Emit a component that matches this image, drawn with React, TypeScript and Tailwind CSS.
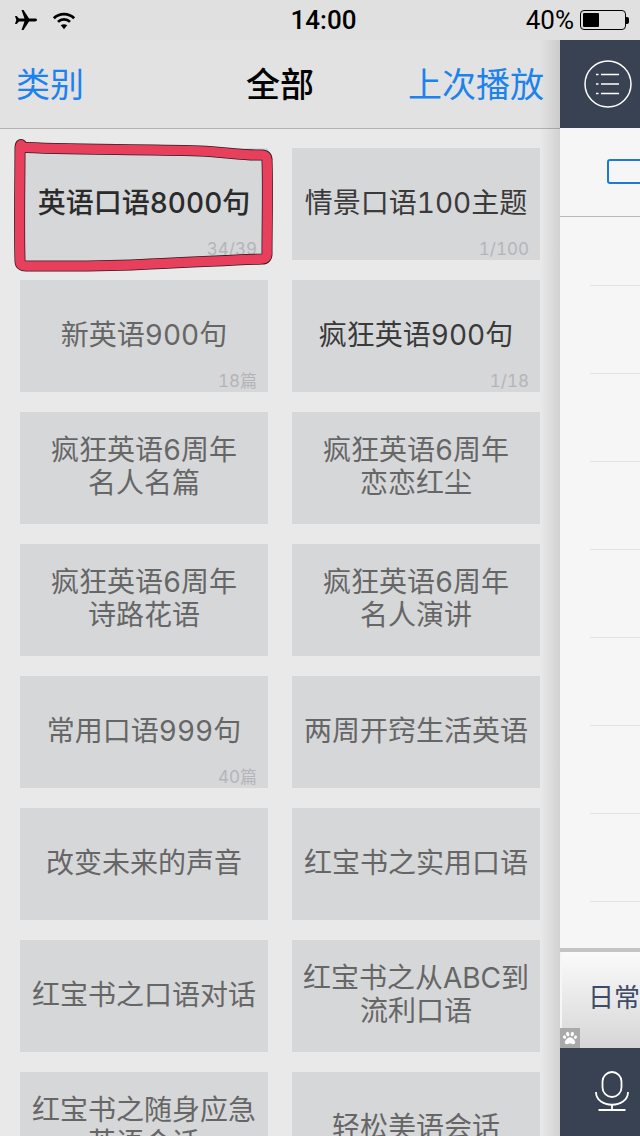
import { FaPaw } from "react-icons/fa";

const tiles = [
  { lines: ["英语口语8000句"], badge: "34/39", tone: "text-[#2b2b2b] font-medium" },
  { lines: ["情景口语100主题"], badge: "1/100", tone: "text-[#3a3a3a]" },
  { lines: ["新英语900句"], badge: "18篇", tone: "text-[#666666]" },
  { lines: ["疯狂英语900句"], badge: "1/18", tone: "text-[#3a3a3a]" },
  { lines: ["疯狂英语6周年", "名人名篇"], tone: "text-[#666666]" },
  { lines: ["疯狂英语6周年", "恋恋红尘"], tone: "text-[#666666]" },
  { lines: ["疯狂英语6周年", "诗路花语"], tone: "text-[#666666]" },
  { lines: ["疯狂英语6周年", "名人演讲"], tone: "text-[#666666]" },
  { lines: ["常用口语999句"], badge: "40篇", tone: "text-[#666666]" },
  { lines: ["两周开窍生活英语"], tone: "text-[#666666]" },
  { lines: ["改变未来的声音"], tone: "text-[#666666]" },
  { lines: ["红宝书之实用口语"], tone: "text-[#666666]" },
  { lines: ["红宝书之口语对话"], tone: "text-[#666666]" },
  { lines: ["红宝书之从ABC到", "流利口语"], tone: "text-[#666666]" },
  { lines: ["红宝书之随身应急", "英语会话"], tone: "text-[#666666]" },
  { lines: ["轻松美语会话"], tone: "text-[#666666]" },
];

function Tile({ lines, badge, tone }: { lines: string[]; badge?: string; tone: string }) {
  return (
    <div className={`relative h-[112px] pb-[2px] flex flex-col items-center justify-center bg-[#d6d7d9] text-[28px] leading-[33px] tabular-nums ${tone}`}>
      {lines.map((line) => (
        <span key={line}>{line}</span>
      ))}
      {badge && (
        <span className="absolute right-[11px] bottom-[2px] text-[17px] leading-[18px] font-normal text-[#b4b5b7]">
          {badge}
        </span>
      )}
    </div>
  );
}

function Scribble() {
  const d =
    "M20 147 C 60 150 130 149 200 151 C 225 152 245 156 262 155 Q 267 155 267 160 C 268 185 267 225 267 254 Q 267 259 262 259 C 230 260 200 262 150 264 C 100 267 60 266 26 266 Q 20 266 20 261 C 19 225 20 185 20 147 Z";
  return (
    <svg className="absolute left-0 top-0 pointer-events-none" width="290" height="280" viewBox="0 0 290 280" fill="none">
      <path d={d} stroke="#2a1a20" strokeWidth="11" strokeLinejoin="round" />
      <circle cx="21" cy="145" r="6" fill="#2a1a20" />
      <path d={d} stroke="#e8405c" strokeWidth="9.500" strokeLinejoin="round" />
      <circle cx="21" cy="145" r="5" fill="#e8405c" />
    </svg>
  );
}

export default function App() {
  return (
    <div className="relative w-[640px] h-[1136px] overflow-hidden flex flex-col bg-[#e9e9e9] font-['Inter','Noto_Sans_CJK_SC',sans-serif]">
      {/* status bar */}
      <div className="h-[40px] shrink-0 bg-[#e0e0e0] flex items-center justify-between pl-[13px] pr-[11px] text-black font-['Roboto',sans-serif]">
        <div className="w-[225px] flex items-center gap-[14px]">
          <svg width="25" height="24" viewBox="0 0 24 24" fill="currentColor">
            <path d="M23.500 12c0-.9-1-1.400-2-1.400h-6L10 2H8l3 8.600H5.500L3.200 8H1.500l1.300 4-1.300 4h1.700l2.300-2.600H11L8 22h2l5.500-8.600h6c1 0 2-.5 2-1.400z" />
          </svg>
          <svg width="24" height="19" viewBox="0 0 26 20" fill="none" stroke="currentColor" strokeWidth="3">
            <path d="M2 7.500 C8 1.500 18 1.500 24 7.500" />
            <path d="M6.500 11.500 C10 8 16 8 19.500 11.500" />
            <path d="M13 19.500 L9.500 15.200 C11.500 13.600 14.500 13.600 16.500 15.200 Z" fill="currentColor" stroke="none" />
          </svg>
        </div>
        <span className="text-[26px] font-medium leading-none">14:00</span>
        <div className="w-[220px] flex items-center justify-end gap-[6px]">
          <span className="text-[26px] leading-none">40%</span>
          <div className="flex items-center">
            <div className="w-[46px] h-[20px] border border-black rounded-[4px] p-[2px]">
              <div className="w-[16px] h-full bg-black rounded-[1px]" />
            </div>
            <div className="w-[3px] h-[7px] bg-black rounded-r-[2px]" />
          </div>
        </div>
      </div>

      <div className="flex-1 flex min-h-0">
        {/* left list */}
        <div className="relative w-[560px] shrink-0 flex flex-col">
          <div className="h-[89px] shrink-0 bg-[#e2e2e2] border-b border-[#b3b3b3] flex items-center justify-between pl-[16px] pr-[16px] text-[34px] text-[#1c83ee]">
            <span className="w-[200px]">类别</span>
            <span className="font-medium text-black">全部</span>
            <span className="w-[200px] text-right whitespace-nowrap flex justify-end">上次播放</span>
          </div>
          <div className="grid grid-cols-2 gap-x-6 gap-y-5 px-5 pt-[19px]">
            {tiles.map((tile) => (
              <Tile key={tile.lines.join("")} {...tile} />
            ))}
          </div>
          <div className="absolute right-0 top-0 bottom-0 w-[20px] bg-gradient-to-r from-transparent to-black/10" />
        </div>

        {/* right drawer */}
        <div className="w-[80px] shrink-0 flex flex-col bg-[#f6f6f6] overflow-hidden">
          <div className="h-[88px] shrink-0 bg-[#384252] flex items-center pl-[24px]">
            <svg width="48" height="48" viewBox="0 0 48 48" fill="none" stroke="#ffffff">
              <circle cx="24" cy="24" r="23" strokeWidth="1.500" />
              <path d="M17 14.500H35M17 24H35M17 33.500H35" strokeWidth="1.500" />
              <path d="M12 14.500H14.500M12 24H14.500M12 33.500H14.500" strokeWidth="1.500" />
            </svg>
          </div>
          <div className="h-[89px] shrink-0 border-b border-[#b9b9b9] pt-[31px] pl-[47px]">
            <div className="w-[60px] h-[25px] border-2 border-[#1c78dc] rounded-l-[3px]" />
          </div>
          <div className="h-[69px] shrink-0 ml-[30px] border-b border-[#e2e2e2]" />
          {[0, 1, 2, 3, 4, 5, 6].map((row) => (
            <div key={row} className="h-[88px] shrink-0 ml-[30px] border-b border-[#e2e2e2]" />
          ))}
          <div className="h-[50px] shrink-0 border-b-[4px] border-[#c4c4c4]" />
          <div className="relative h-[96px] shrink-0 ml-[2px] bg-gradient-to-b from-[#fbfbfb] to-[#d6d6d6] pl-[26px] pt-[27px] text-[26px] leading-[38px] text-[#3f4a66] whitespace-nowrap">
            日常生活
            <div className="absolute left-[-2px] bottom-0 w-[20px] h-[20px] bg-[#a9a9a9] flex items-center justify-center text-white">
              <FaPaw size={14} />
            </div>
          </div>
          <div className="flex-1 bg-[#384252] flex items-center pl-[35px]">
            <svg width="34" height="42" viewBox="0 0 34 42" fill="none" stroke="#ffffff" strokeWidth="1.800">
              <rect x="7.500" y="1" width="19" height="25" rx="9.500" />
              <path d="M1 21 C1 38 33 38 33 21" />
              <path d="M17 34V39M3.500 39H30.500" />
            </svg>
          </div>
        </div>
      </div>

      <Scribble />
    </div>
  );
}
